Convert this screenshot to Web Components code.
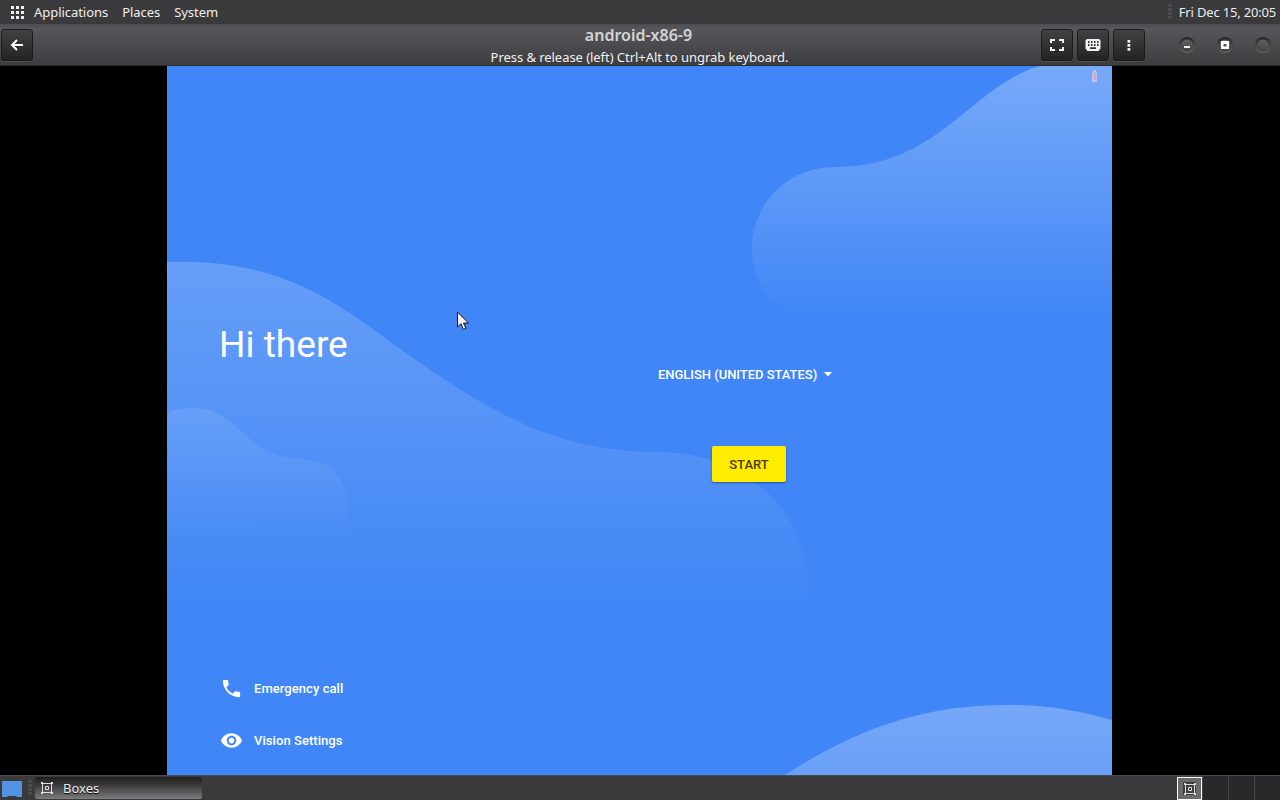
<!DOCTYPE html>
<html lang="en">
<head>
<meta charset="utf-8">
<title>android-x86-9</title>
<style>
  body {
    margin: 0;
    background: #000;
  }
</style>
</head>
<body>
<desktop-shell>
  <top-panel slot="top">
    <panel-menu>Applications</panel-menu>
    <panel-menu>Places</panel-menu>
    <panel-menu>System</panel-menu>
    <span slot="clock">Fri Dec 15, 20:05</span>
  </top-panel>
  <title-bar slot="title">
    <tool-button slot="start" icon="back"></tool-button>
    <span slot="title">android-x86-9</span>
    <span slot="subtitle">Press &amp; release (left) Ctrl+Alt to ungrab keyboard.</span>
    <tool-button slot="end" icon="fullscreen"></tool-button>
    <tool-button slot="end" icon="keyboard"></tool-button>
    <tool-button slot="end" icon="more"></tool-button>
    <window-button slot="window" kind="minimize"></window-button>
    <window-button slot="window" kind="maximize"></window-button>
    <window-button slot="window" kind="close"></window-button>
  </title-bar>
  <android-screen>
    <span slot="heading">Hi there</span>
    <help-link slot="links" icon="phone">Emergency call</help-link>
    <help-link slot="links" icon="eye">Vision Settings</help-link>
    <span slot="language">ENGLISH (UNITED STATES)</span>
    <start-button slot="action">START</start-button>
  </android-screen>
  <task-bar slot="bottom">Boxes</task-bar>
  <mouse-pointer slot="pointer"></mouse-pointer>
</desktop-shell>

<script>
  // Shapes shared by the toolbar, the task bar and the welcome screen
  const icons = {
    back: '<svg width="16" height="16" viewBox="0 0 16 16" fill="none" stroke="#fff" stroke-width="2"><path d="M8 3 3 8l5 5M3 8h11"/></svg>',
    fullscreen: '<svg width="16" height="16" viewBox="0 0 16 16" fill="none" stroke="#f2f2f2" stroke-width="2"><path d="M2 6V3h4M10 3h4v3M14 10v3h-4M6 13H2v-3"/></svg>',
    keyboard: '<svg width="16" height="16" viewBox="0 0 16 16"><path fill="#f2f2f2" fill-rule="evenodd" d="M2 2h12l1.500 1.500v8L13.500 14h-11L.5 11.500v-8zM3 4v2h1.500V4zm3 0v2h1.500V4zm3 0v2h1.500V4zm3 0v2h1.500V4zM3 7v2h1.500V7zm3 0v2h1.500V7zm3 0v2h1.500V7zm3 0v2h1.500V7zM5 10.300v1.700h6v-1.700z"/></svg>',
    more: '<svg width="16" height="16" viewBox="0 0 16 16" fill="#f2f2f2"><path d="M6.500 3h2.800v2.800H6.500zM6.500 7h2.800v2.800H6.500zM6.500 11h2.800v2.800H6.500z"/></svg>',
    phone: '<svg width="24" height="24" viewBox="0 0 24 24" fill="#fff"><path d="M6.620 10.790c1.440 2.830 3.760 5.140 6.590 6.590l2.200-2.200c.27-.27.67-.36 1.020-.24 1.120.37 2.330.57 3.570.57.55 0 1 .45 1 1V20c0 .55-.45 1-1 1-9.390 0-17-7.610-17-17 0-.55.45-1 1-1h3.500c.55 0 1 .45 1 1 0 1.250.2 2.450.57 3.570.11.35.03.74-.25 1.020l-2.200 2.200z"/></svg>',
    eye: '<svg width="24" height="24" viewBox="0 0 24 24" fill="#fff"><path d="M12 4.500C7 4.500 2.730 7.610 1 12c1.730 4.390 6 7.500 11 7.500s9.270-3.110 11-7.500c-1.730-4.390-6-7.500-11-7.500zM12 17c-2.760 0-5-2.240-5-5s2.240-5 5-5 5 2.240 5 5-2.240 5-5 5zm0-8c-1.660 0-3 1.340-3 3s1.340 3 3 3 3-1.340 3-3-1.340-3-3-3z"/></svg>',
    boxes: '<svg width="12" height="12" viewBox="0 0 12 12" fill="none" stroke="#dedede"><path d="M1.500 1.500h9v9h-9z"/><path d="M4.500 4.500h3v3h-3z"/><path stroke="none" fill="#dedede" d="M0 0h2v2H0zM10 0h2v2h-2zM0 10h2v2H0zM10 10h2v2h-2z"/></svg>'
  };

  // Registers an element whose shadow root is filled from a markup function
  function define(tagName, markup) {
    customElements.define(tagName, class extends HTMLElement {
      constructor() {
        super();
        const root = this.attachShadow({ mode: 'open' });
        root.innerHTML = markup(this);
      }
    });
  }

  define('desktop-shell', () => `
    <style>
      :host {
        display: grid;
        grid-template-rows: 24px 42px 709px 25px;
        width: 1280px;
        height: 800px;
        overflow: hidden;
        position: relative;
        font-family: "Noto Sans", sans-serif;
        font-size: 13px;
        color: #eee;
      }
      main {
        display: flex;
        padding-left: 167px;
        background: #000;
      }
    </style>
    <slot name="top"></slot>
    <slot name="title"></slot>
    <main><slot></slot></main>
    <slot name="bottom"></slot>
    <slot name="pointer"></slot>
  `);

  define('top-panel', () => `
    <style>
      :host {
        display: flex;
        align-items: center;
        padding: 0 4px 0 10px;
        background: #3a3a3c;
        white-space: nowrap;
      }
      nav {
        display: flex;
        gap: 14px;
        margin-left: 10px;
        flex: 1;
        letter-spacing: -0.05px;
      }
      .grip { margin-right: 7px; }
      .clock { letter-spacing: -0.18px; }
    </style>
    <svg width="14" height="14" viewBox="0 0 14 14" fill="#eee"><path d="M1 1h3v3H1zM6 1h3v3H6zM11 1h3v3h-3zM1 6h3v3H1zM6 6h3v3H6zM11 6h3v3h-3zM1 11h3v3H1zM6 11h3v3H6zM11 11h3v3h-3z"/></svg>
    <nav><slot></slot></nav>
    <svg class="grip" width="4" height="16" viewBox="0 0 4 16" fill="#4c4c4f"><path d="M0 0h4v3H0zM0 4h4v3H0zM0 8h4v3H0zM0 12h4v3H0z"/></svg>
    <span class="clock"><slot name="clock"></slot></span>
  `);

  define('panel-menu', () => `
    <style>
      :host { display: block; }
    </style>
    <slot></slot>
  `);

  define('title-bar', () => `
    <style>
      :host {
        display: grid;
        grid-template-columns: 240px 1fr 240px;
        box-sizing: border-box;
        border-bottom: 1px solid #2b2b2d;
        background: linear-gradient(#4d4d51, #57575b 12%, #3d3d40);
        white-space: nowrap;
      }
      .start, .end {
        display: flex;
        align-items: center;
      }
      .start { padding-left: 1px; }
      .end {
        gap: 4px;
        padding-left: 1px;
      }
      .window {
        display: flex;
        gap: 20px;
        margin-left: 29px;
      }
      .titles {
        display: flex;
        flex-direction: column;
        align-items: center;
        padding-right: 1px;
      }
      .title {
        height: 22px;
        line-height: 22px;
        padding-right: 2px;
        font-size: 16px;
        font-weight: 600;
        color: #d4d4d6;
      }
      .subtitle {
        height: 20px;
        line-height: 22px;
        letter-spacing: -0.05px;
        color: #f0f0f0;
      }
    </style>
    <div class="start"><slot name="start"></slot></div>
    <div class="titles">
      <div class="title"><slot name="title"></slot></div>
      <div class="subtitle"><slot name="subtitle"></slot></div>
    </div>
    <div class="end">
      <slot name="end"></slot>
      <div class="window"><slot name="window"></slot></div>
    </div>
  `);

  define('tool-button', el => `
    <style>
      :host {
        display: flex;
        align-items: center;
        justify-content: center;
        box-sizing: border-box;
        width: 32px;
        height: 32px;
        border: 1px solid #1c1c1d;
        border-radius: 3px;
        background: linear-gradient(#414143, #242425);
        box-shadow: 0 1px 0 rgba(255, 255, 255, .08);
      }
      svg { display: block; }
    </style>
    ${icons[el.getAttribute('icon')]}
  `);

  const windowMarks = {
    minimize: '<path fill="#eee" d="M6 10h6v2H6z"/>',
    maximize: '<path fill="#fff" fill-rule="evenodd" d="M5 5h8v8H5zM7.500 8v2.500h3V8z"/>',
    close: ''
  };

  define('window-button', el => `
    <style>
      :host { display: block; }
      svg { display: block; }
    </style>
    <svg width="18" height="18" viewBox="0 0 18 18">
      <defs>
        <linearGradient id="ring" x2="0" y2="1"><stop stop-color="#242426"/><stop offset="1" stop-color="#626264"/></linearGradient>
        <linearGradient id="dome" x2="0" y2="1"><stop stop-color="#626263"/><stop offset="1" stop-color="#414142"/></linearGradient>
      </defs>
      <circle cx="9" cy="9" r="8" fill="url(#ring)"/>
      <circle cx="9" cy="9.500" r="6" fill="url(#dome)"/>
      ${windowMarks[el.getAttribute('kind')]}
    </svg>
  `);

  define('android-screen', () => `
    <style>
      :host {
        display: grid;
        grid-template-columns: 420px 1fr;
        position: relative;
        width: 945px;
        height: 709px;
        overflow: hidden;
        background: #4086f6;
        color: #fff;
        font-family: Roboto, sans-serif;
      }
      .clouds {
        position: absolute;
        inset: 0;
      }
      .left, .right {
        display: flex;
        flex-direction: column;
        position: relative;
      }
      .left { padding: 255px 0 0 52px; }
      .right {
        align-items: flex-start;
        padding: 299px 0 0 71px;
      }
      h1 {
        margin: 0 0 307px;
        font-size: 37.100px;
        line-height: 48px;
        font-weight: 400;
        height: 48px;
      }
      .links {
        display: flex;
        flex-direction: column;
        gap: 28px;
        padding-left: 1px;
      }
      .language {
        display: flex;
        align-items: center;
        gap: 7px;
        height: 19px;
        margin-bottom: 62px;
        font-size: 13px;
        font-weight: 500;
        letter-spacing: -0.03px;
        white-space: nowrap;
      }
      .action { margin-left: 54px; }
    </style>
    <svg class="clouds" width="945" height="709" viewBox="167 66 945 709">
      <defs>
        <linearGradient id="hill" gradientUnits="userSpaceOnUse" x1="0" y1="262" x2="0" y2="612"><stop stop-color="#fff" stop-opacity=".2"/><stop offset="1" stop-color="#fff" stop-opacity="0"/></linearGradient>
        <linearGradient id="puff" gradientUnits="userSpaceOnUse" x1="0" y1="408" x2="0" y2="540"><stop stop-color="#fff" stop-opacity=".1"/><stop offset="1" stop-color="#fff" stop-opacity="0"/></linearGradient>
        <linearGradient id="bank" gradientUnits="userSpaceOnUse" x1="0" y1="66" x2="0" y2="318"><stop stop-color="#fff" stop-opacity=".29"/><stop offset="1" stop-color="#fff" stop-opacity="0"/></linearGradient>
        <linearGradient id="rise" gradientUnits="userSpaceOnUse" x1="0" y1="704" x2="0" y2="1000"><stop stop-color="#fff" stop-opacity=".28"/><stop offset="1" stop-color="#fff" stop-opacity="0"/></linearGradient>
      </defs>
      <path fill="url(#hill)" d="M167 262C300 257 355 320 430 370C510 424 570 452 660 452C740 453 808 505 808 590V612H167z"/>
      <path fill="url(#puff)" d="M167 413C182 407 202 406 215 412C238 424 254 450 284 457C302 461 325 457 338 475C346 486 347 500 347 520V540H167z"/>
      <path fill="url(#bank)" d="M1040 66C970 86 940 167 835 167C788 167 752 203 752 249C752 280 768 306 800 318H1112V66z"/>
      <path fill="url(#rise)" d="M785 775C855 730 920 705 1007 705C1048 705 1080 711 1112 720V775z"/>
      <path fill="#b9c4f2" d="M1092 73l1-1v-2h3v2l1 1v9h-5z"/>
      <path fill="#d99ab8" d="M1094 73h1.500v7h-1.500z"/>
    </svg>
    <div class="left">
      <h1><slot name="heading"></slot></h1>
      <div class="links"><slot name="links"></slot></div>
    </div>
    <div class="right">
      <div class="language">
        <slot name="language"></slot>
        <svg width="8" height="5" viewBox="0 0 8 5" fill="#fff"><path d="M0 0h8L4 4.500z"/></svg>
      </div>
      <div class="action"><slot name="action"></slot></div>
    </div>
  `);

  define('help-link', el => `
    <style>
      :host {
        display: flex;
        align-items: center;
        gap: 11px;
        height: 24px;
        font-size: 13px;
        font-weight: 500;
        letter-spacing: .06px;
        white-space: nowrap;
      }
      svg {
        display: block;
        width: 23px;
        height: 23px;
      }
    </style>
    ${icons[el.getAttribute('icon')]}
    <span><slot></slot></span>
  `);

  define('start-button', () => `
    <style>
      :host {
        display: flex;
        align-items: center;
        justify-content: center;
        width: 74px;
        height: 36px;
        border-radius: 2px;
        background: #ffec00;
        box-shadow: 0 1px 2px rgba(0, 0, 0, .4);
        color: #4a3c10;
        font-size: 13px;
        font-weight: 500;
      }
    </style>
    <slot></slot>
  `);

  define('task-bar', () => `
    <style>
      :host {
        display: flex;
        box-sizing: border-box;
        border-top: 1px solid #4b4b4d;
        background: #3a3a3c;
      }
      .desktop { margin: 5px 6px 0 2px; }
      .grip { margin: 4px 3px 0 0; }
      .task {
        display: flex;
        align-items: center;
        gap: 10px;
        box-sizing: border-box;
        width: 167px;
        height: 22px;
        margin-top: 1px;
        padding-left: 6px;
        border-radius: 2px;
        background: linear-gradient(#202021, #3c3c3d 40%, #7c7c7e);
      }
      .task span { text-shadow: 0 1px 1px #000; }
      .pager {
        display: grid;
        grid-template-columns: repeat(4, 25px);
        gap: 1px;
        margin-left: auto;
        background: #454548;
      }
      .pager div { background: #29292c; }
      .pager .current {
        display: flex;
        align-items: center;
        justify-content: center;
        box-sizing: border-box;
        margin-top: 1px;
        border: 1px solid #fff;
        background: #6b6b6b;
      }
      .pager svg {
        padding: 1px 0 0 1px;
        background: #3d3d3e;
      }
    </style>
    <svg class="desktop" width="20" height="17" viewBox="0 0 20 17"><path fill="#5294e2" d="M0 0h20v16h-5l-1-1H6l-1 1H0z"/></svg>
    <svg class="grip" width="4" height="16" viewBox="0 0 4 16" fill="#4c4c4f"><path d="M0 0h4v3H0zM0 4h4v3H0zM0 8h4v3H0zM0 12h4v3H0z"/></svg>
    <div class="task">${icons.boxes}<span><slot></slot></span></div>
    <div class="pager">
      <div class="current">${icons.boxes}</div>
      <div></div>
      <div></div>
      <div></div>
    </div>
  `);

  define('mouse-pointer', () => `
    <style>
      :host {
        display: block;
        position: absolute;
        left: 457px;
        top: 311px;
      }
      svg { display: block; }
    </style>
    <svg width="13" height="20" viewBox="0 0 13 20"><path fill="#f4f4f4" stroke="#111" d="M.5 1v15l3.500-3.300L6.300 18.500l2.700-1.200-2.500-5.200h5z"/></svg>
  `);
</script>
</body>
</html>
